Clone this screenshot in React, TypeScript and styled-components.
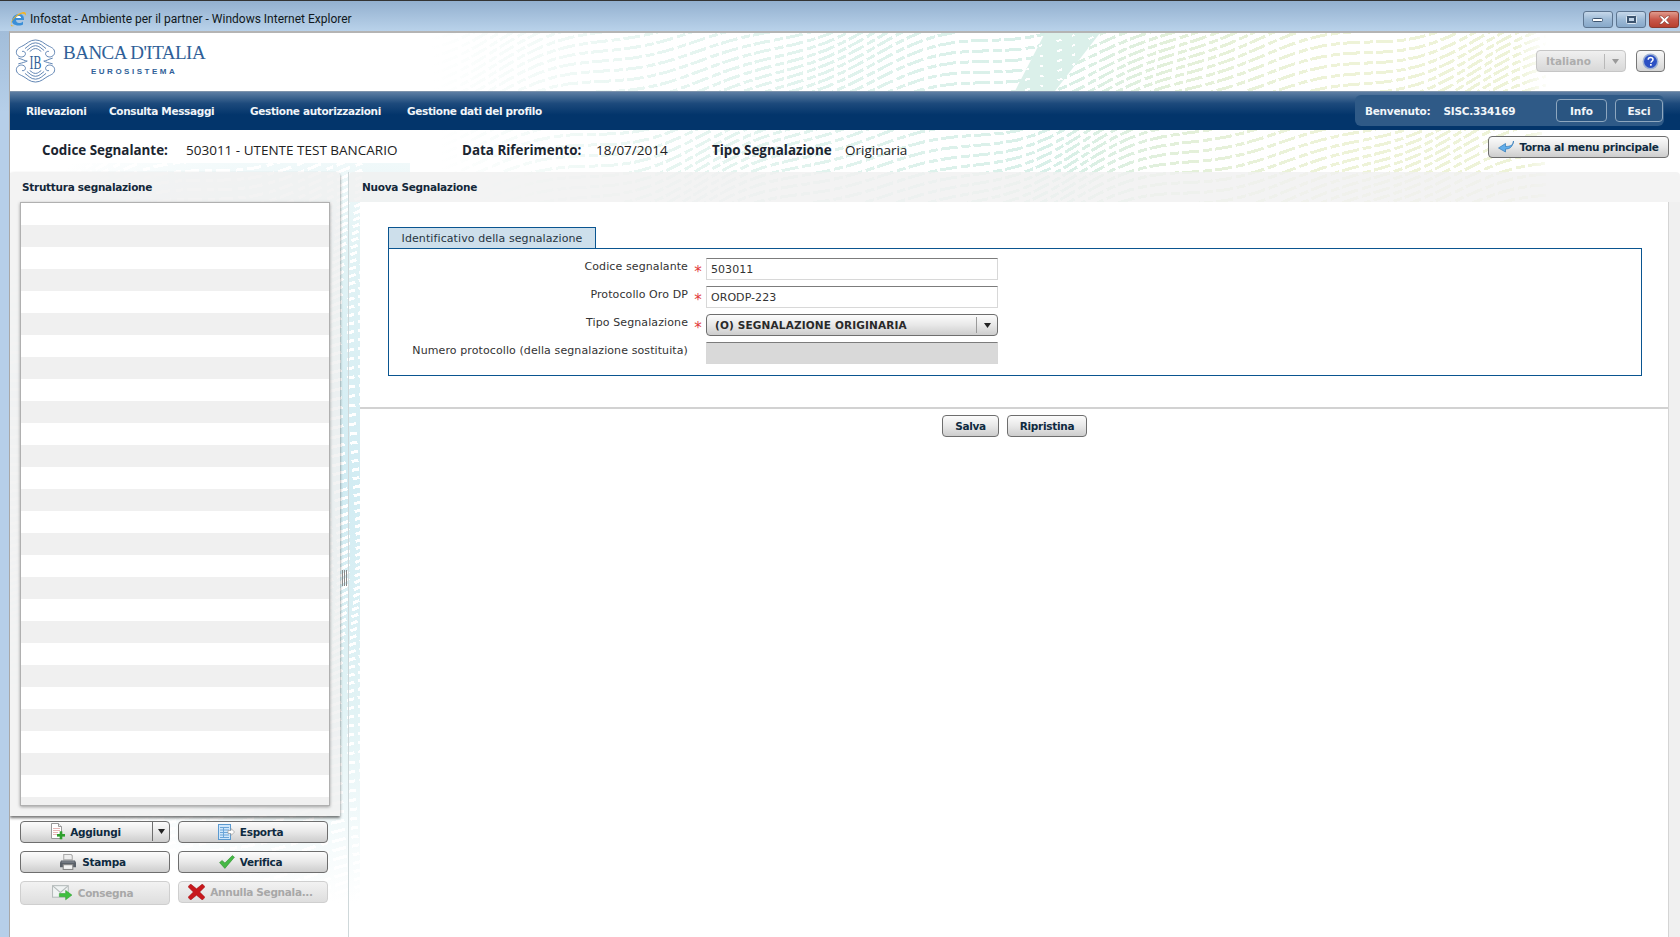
import React from "react";
import styled, { createGlobalStyle } from "styled-components";

const GlobalStyle = createGlobalStyle`
  html, body {
    margin: 0;
    padding: 0;
    height: 100%;
    overflow: hidden;
    background: #fff;
  }
  * { box-sizing: border-box; }
`;

const UI_FONT = `"DejaVu Sans", Verdana, sans-serif`;

/* window chrome */
const Win = styled.div`
  width: 1680px;
  height: 937px;
  display: flex;
  flex-direction: column;
  overflow: hidden;
  background: linear-gradient(#9ab6d3, #b6cfe9 12%, #b6cfe9);
  font-family: ${UI_FONT};
`;

const TitleBar = styled.div`
  height: 31px;
  flex: none;
  display: flex;
  align-items: center;
  gap: 3px;
  padding: 5px 1px 0 10px;
  border-top: 1px solid #333;
  background: linear-gradient(#93b0cf, #b9d2ea);
`;

const TitleText = styled.span`
  font: 12px Roboto, sans-serif;
  color: #101820;
  flex: 1;
`;

const WinControls = styled.div`
  display: flex;
  align-self: flex-start;
  gap: 3px;
  margin-top: 5px;
`;

const WinBtn = styled.div<{ $close?: boolean }>`
  width: 30px;
  height: 17px;
  display: flex;
  align-items: center;
  justify-content: center;
  border: 1px solid ${(p) => (p.$close ? "#8a3a30" : "#5d7590")};
  border-radius: 3px;
  background: ${(p) =>
    p.$close
      ? "linear-gradient(#e09a8c, #c9584a 50%, #b8402f)"
      : "linear-gradient(#c6d8ea, #9dbad6 50%, #87a8c9)"};
`;

const Body = styled.div`
  position: relative;
  flex: 1;
  margin-left: 9px;
  display: flex;
  flex-direction: column;
  background: #fff;
  border-top: 2px solid #b4b4b4;
  border-left: 1px solid #a8a8a8;
  overflow: hidden;
`;

const Backdrop = styled.svg`
  position: absolute;
  left: 0;
  top: 0;
  z-index: 0;
`;

/* top */
const Header = styled.header`
  position: relative;
  z-index: 1;
  height: 58px;
  flex: none;
  display: flex;
  align-items: flex-start;
  padding-left: 5px;
`;

const LogoWrap = styled.div`
  display: flex;
  align-items: center;
  gap: 7px;
  margin-top: 6px;
`;

const LogoText = styled.div`
  display: flex;
  flex-direction: column;
  align-items: center;
  margin-top: -4px;
`;

const LogoName = styled.span`
  font: 19px/22px "Liberation Serif", serif;
  color: #2f5f98;
  letter-spacing: -0.5px;
`;

const LogoSub = styled.span`
  font: bold 8px/11px "Liberation Sans", sans-serif;
  color: #2f5f98;
  letter-spacing: 2.5px;
  margin-top: 2px;
`;

const HeaderTools = styled.div`
  margin-left: auto;
  margin-top: 17px;
  margin-right: 15px;
  display: flex;
  gap: 10px;
`;

const LangSelect = styled.div`
  width: 90px;
  height: 22px;
  display: flex;
  align-items: center;
  border: 1px solid #c6c6c6;
  border-radius: 4px;
  background: linear-gradient(#f0f0f0, #d8d8d8);
  font-size: 10.5px;
  font-weight: bold;
  color: #adadad;
  padding-left: 9px;
`;

const LangArrow = styled.span`
  margin-left: auto;
  width: 21px;
  height: 15px;
  border-left: 1px solid #b8b8b8;
  display: flex;
  align-items: center;
  justify-content: center;
`;

const HelpBtn = styled.div`
  width: 29px;
  height: 22px;
  display: flex;
  align-items: center;
  justify-content: center;
  border: 1px solid #777;
  border-radius: 4px;
  background: linear-gradient(#fafafa, #d4d4d4);
`;

const Nav = styled.nav`
  position: relative;
  z-index: 1;
  height: 39px;
  flex: none;
  display: grid;
  grid-template-columns: 83px 141px 157px 1fr auto;
  align-items: center;
  padding: 0 16px 1px 16px;
  background: linear-gradient(#5d7ea3, #1d4a7c 30%, #03356b 60%, #03356b);
  border-top: 1px solid #7d93ac;
`;

const NavItem = styled.span`
  font-size: 10.5px;
  font-weight: bold;
  color: #f1f5f9;
  letter-spacing: -0.35px;
`;

const UserBox = styled.div`
  height: 31px;
  width: 309px;
  display: flex;
  align-items: center;
  padding: 0 1px 0 10px;
  border-radius: 6px;
  background: #2f5a87;
  color: #f1f5f9;
  font-size: 10.5px;
  font-weight: bold;
  letter-spacing: -0.25px;
`;

const UserName = styled.span`
  margin-left: 13px;
`;

const UserBtn = styled.div<{ $w: number; $first?: boolean }>`
  width: ${(p) => p.$w}px;
  height: 23px;
  margin-left: ${(p) => (p.$first ? "auto" : "8px")};
  display: flex;
  align-items: center;
  justify-content: center;
  border: 1px solid #8ea7bf;
  border-radius: 4px;
  background: #2a5581;
  letter-spacing: 0;
`;

const InfoBar = styled.div`
  position: relative;
  z-index: 1;
  height: 42px;
  flex: none;
  display: grid;
  grid-template-columns: 144px 276px 134px 116px 133px 1fr auto;
  align-items: center;
  padding: 0 11px 2px 32px;
`;

const InfoLabel = styled.span`
  font: bold 13.4px "Open Sans", sans-serif;
  color: #1b2530;
`;

const InfoValue = styled.span`
  font: 13.5px "Open Sans", sans-serif;
  color: #222;
`;

const Btn = styled.div<{ $off?: boolean; $w?: number; $h?: number }>`
  width: ${(p) => (p.$w ? `${p.$w}px` : "auto")};
  height: ${(p) => p.$h ?? 22}px;
  display: flex;
  align-items: center;
  justify-content: center;
  gap: 5px;
  padding-bottom: 1px;
  border: 1px solid ${(p) => (p.$off ? "#cfcfcf" : "#6e6e6e")};
  border-radius: 4px;
  background: ${(p) =>
    p.$off
      ? "linear-gradient(#f2f2f2, #dedede)"
      : "linear-gradient(#fcfcfc, #e8e8e8 50%, #cdcdcd)"};
  color: ${(p) => (p.$off ? "#a8a8a8" : "#0f2a40")};
  font-size: 10.5px;
  font-weight: bold;
  letter-spacing: -0.3px;
`;

const BackBtn = styled(Btn)`
  width: 181px;
  align-self: start;
  margin-top: 6px;
`;

const ActionBtn = styled(Btn)`
  padding-right: 5px;
`;

const SplitBtnPart = styled.span`
  flex: 1;
  height: 100%;
  display: flex;
  align-items: center;
  justify-content: center;
  gap: 5px;
  padding-left: 3px;
`;

const SplitArrow = styled.span`
  width: 17px;
  height: 100%;
  display: flex;
  align-items: center;
  justify-content: center;
  border-left: 1px solid #6e6e6e;
`;

/* main area */
const Main = styled.div`
  position: relative;
  z-index: 1;
  flex: 1;
  min-height: 0;
  display: flex;
`;

const LeftCol = styled.aside`
  width: 330px;
  flex: none;
  display: flex;
  flex-direction: column;
`;

const TreePanel = styled.section`
  height: 644px;
  flex: none;
  padding: 0 10px 0 10px;
  background: rgba(240, 240, 240, 0.82);
  border-radius: 4px 4px 0 0;
  box-shadow: 0 2px 3px rgba(0, 0, 0, 0.55);
`;

const PanelTitle = styled.div`
  height: 30px;
  display: flex;
  align-items: center;
  padding-left: 2px;
  font-size: 10.5px;
  font-weight: bold;
  color: #14283a;
  letter-spacing: -0.28px;
`;

const TreeList = styled.div`
  height: 604px;
  width: 310px;
  overflow: hidden;
  border: 1px solid #b0b0b0;
  background: #fff;
  box-shadow: 0 1px 3px rgba(0, 0, 0, 0.35);
`;

const TreeRow = styled.div<{ $alt: boolean }>`
  height: 22px;
  background: ${(p) => (p.$alt ? "#f0f0f0" : "#fff")};
`;

const ActionGrid = styled.div`
  display: grid;
  grid-template-columns: 150px 150px;
  gap: 8px;
  align-items: start;
  padding: 5px 0 0 10px;
`;

const Splitter = styled.div`
  width: 9px;
  flex: none;
  display: flex;
  align-items: center;
  justify-content: center;
  border-right: 1px solid #cfd8da;
  padding: 46px 0 0 2px;
`;

const Grip = styled.div`
  width: 6px;
  height: 16px;
  background: repeating-linear-gradient(90deg, #8a8a8a 0 1px, transparent 1px 2px);
`;

const RightCol = styled.section`
  flex: 1;
  min-width: 0;
  display: flex;
  flex-direction: column;
  padding: 0 11px;
`;

const RightTitle = styled(PanelTitle)`
  margin: 0 -11px;
  padding-left: 13px;
  background: rgba(240, 240, 240, 0.82);
  border-radius: 4px 4px 0 0;
  flex: none;
`;

const Content = styled.div`
  flex: 1;
  background: #fff;
  display: flex;
  flex-direction: column;
  border-right: 1px solid #d4d4d4;
  box-shadow: 11px 0 0 #f0f0f0;
`;

const FormArea = styled.div`
  height: 207px;
  flex: none;
  padding: 25px 26px 0 28px;
  border-bottom: 2px solid #d2d2d2;
`;

const TabLabel = styled.div`
  width: 208px;
  height: 21px;
  display: flex;
  align-items: center;
  justify-content: center;
  border: 1px solid #0a5590;
  border-bottom: none;
  background: #cddfeb;
  font-size: 11px;
  letter-spacing: 0.1px;
  color: #26343f;
`;

const FieldBox = styled.div`
  height: 128px;
  border: 1px solid #0a5590;
  padding-top: 9px;
  display: grid;
  grid-template-columns: 299px 18px 292px;
  grid-auto-rows: 22px;
  row-gap: 6px;
`;

const FieldLabel = styled.span`
  text-align: right;
  font-size: 11px;
  letter-spacing: 0.1px;
  line-height: 18px;
  color: #333;
`;

const Star = styled.span`
  color: #e23a3a;
  font-size: 15px;
  line-height: 22px;
  text-align: center;
  padding: 3px 0 0 2px;
`;

const TextInput = styled.div<{ $off?: boolean }>`
  height: 22px;
  padding-left: 4px;
  display: flex;
  align-items: center;
  border: 1px solid #d8d8d8;
  border-top-color: #7c7c7c;
  background: ${(p) => (p.$off ? "#d9d9d9" : "#fff")};
  font-size: 11px;
  letter-spacing: 0.05px;
  color: #333;
`;

const SelectBox = styled.div`
  height: 22px;
  display: flex;
  align-items: center;
  padding-left: 8px;
  border: 1px solid #6e6e6e;
  border-radius: 4px;
  background: linear-gradient(#fcfcfc, #e8e8e8 50%, #cdcdcd);
  font-size: 10.5px;
  font-weight: bold;
  letter-spacing: 0.15px;
  color: #2a2a2a;
`;

const SelectArrow = styled.span`
  margin-left: auto;
  width: 21px;
  height: 16px;
  border-left: 1px solid #9a9a9a;
  display: flex;
  align-items: center;
  justify-content: center;
`;

const FormActions = styled.div`
  display: flex;
  gap: 8px;
  padding: 6px 0 0 582px;
`;

const Arrow = ({ color = "#222" }: { color?: string }) => (
  <svg width="7" height="5" viewBox="0 0 7 5">
    <path d="M0 0h7L3.5 5z" fill={color} />
  </svg>
);

const IeIcon = () => (
  <svg width="17" height="16" viewBox="0 0 17 16" style={{ flex: "none" }}>
    <path d="M2 10c0-4 3-7 7-7 3 0 5 2 5 5v1H6c0 2 1.500 3 3 3s3-.5 4-1.500v3c-1 .7-2.500 1-4 1-4 0-7-1.500-7-4.500z" fill="#3a8fd8" />
    <path d="M6 7h5c0-1.500-1-2-2.500-2S6.200 5.700 6 7z" fill="#fff" />
    <path d="M1 13C.5 9 7 2 13 1c3-.500 3.500 1.500 2.500 4C15.500 2.500 12 2 8 4.500 4 7 1.800 10 1 13z" fill="#f0b429" />
    <path d="M1 13c-.8 2.500 1 3 3.500 1.500C2.500 15 1.500 14.500 1 13z" fill="#f0b429" />
  </svg>
);

const MinGlyph = () => (
  <svg width="12" height="6" viewBox="0 0 12 6">
    <rect x="0.500" y="1.500" width="10" height="3" rx="1" fill="#fff" stroke="#3d5570" />
  </svg>
);

const MaxGlyph = () => (
  <svg width="11" height="9" viewBox="0 0 11 9">
    <rect x="0.500" y="0.500" width="10" height="8" rx="1" fill="#3d5570" stroke="#dde8f2" />
    <rect x="3" y="3" width="5" height="3" fill="#c2d5e8" />
  </svg>
);

const CloseGlyph = () => (
  <svg width="13" height="10" viewBox="0 0 13 10">
    <path d="M1 1h3l2.500 2.500L9 1h3L8.500 5 12 9H9L6.500 6.500 4 9H1l3.500-4z" fill="#fff" stroke="#7a3a30" strokeWidth="0.6" />
  </svg>
);

const HelpIcon = () => (
  <svg width="17" height="17" viewBox="0 0 17 17">
    <circle cx="8.500" cy="8.500" r="8" fill="#9fb2d4" />
    <circle cx="8.500" cy="8.500" r="6.500" fill="#2c50c4" />
    <path d="M6.200 6.700c0-1.400 1-2.200 2.400-2.200s2.400.8 2.400 2c0 1.800-2 1.700-2 3.300" fill="none" stroke="#fff" strokeWidth="1.500" />
    <rect x="8" y="11" width="1.700" height="1.700" fill="#fff" />
  </svg>
);

const BackIcon = () => (
  <svg width="16" height="13" viewBox="0 0 16 13">
    <path d="M15.500 1c0 4-3 5.500-8 5.500V3.500L.5 8 7.500 12V9c4 0 7-1.500 8-8z" fill="#63aeea" stroke="#2f78b8" strokeWidth="0.7" />
  </svg>
);

const AddIcon = () => (
  <svg width="15" height="17" viewBox="0 0 15 17">
    <path d="M1.500.500h7l3 3v12h-10z" fill="#fff" stroke="#9a9a9a" />
    <path d="M8.500.500v3h3" fill="#eee" stroke="#9a9a9a" />
    <path d="M3 5.500h7M3 7.500h7M3 9.500h5M3 11.500h4" stroke="#e6b8b8" />
    <rect x="7" y="11" width="8" height="2.600" fill="#2ea02e" />
    <rect x="9.700" y="8.300" width="2.600" height="8" fill="#2ea02e" />
  </svg>
);

const ExportIcon = () => (
  <svg width="17" height="16" viewBox="0 0 17 16">
    <rect x="0.500" y="0.500" width="12" height="15" fill="#cfe6fa" stroke="#5b9ad0" />
    <path d="M2 3.500h9M2 6h9M2 8.500h9M2 11h9M2 13.500h9M5.500 3v11" stroke="#6aa5d8" />
    <path d="M10 6.500h3V4.500l3.500 3.500-3.500 3.500V9.500h-3z" fill="#fff" stroke="#9a9a9a" strokeWidth="0.7" />
  </svg>
);

const PrintIcon = () => (
  <svg width="18" height="16" viewBox="0 0 16 15">
    <path d="M4 .500h7l1 1v4H4z" fill="#eee" stroke="#aaa" />
    <path d="M1.500 6h13l1 2v4.500H.500V8z" fill="#5a6068" />
    <rect x="3.500" y="10" width="9" height="4.500" fill="#f4f4f4" stroke="#888" />
    <rect x="2" y="7" width="12" height="1" fill="#8a9098" />
  </svg>
);

const CheckIcon = () => (
  <svg width="16" height="14" viewBox="0 0 15 13">
    <path d="M.500 7l2.500-2 2.500 2.500L12.500.500 14.500 2 5.500 12.500z" fill="#45b845" stroke="#2a8a2a" strokeWidth="0.5" />
  </svg>
);

const MailIcon = () => (
  <svg width="21" height="16" viewBox="0 0 20 15">
    <rect x="0.500" y="0.500" width="15" height="11" fill="#f0f3f3" stroke="#b5bbbb" />
    <path d="M1 1l7 6 7-6" fill="none" stroke="#b5bbbb" />
    <path d="M7 8h6V5l6 4.500-6 4.500v-3H7z" fill="#3fc03f" stroke="#2a9a2a" strokeWidth="0.5" />
  </svg>
);

const CrossIcon = () => (
  <svg width="17" height="16" viewBox="0 0 16 15">
    <path d="M0 2.500L2.500 0 8 4.500 13.500 0 16 2.500 11 7.500 16 12.500 13.500 15 8 10.500 2.500 15 0 12.500 5 7.500z" fill="#c8181c" stroke="#9c1014" strokeWidth="0.5" />
  </svg>
);

const BancaLogo = () => (
  <svg width="41" height="44" viewBox="0 0 42 46" fill="none" stroke="#5a80b0" strokeWidth="1">
    <path d="M21 1C15 1 12 5 8 7 4 9 1 10 1 14s5 6 8 4 1-6-2-5" />
    <path d="M21 1c6 0 9 4 13 6 4 2 7 3 7 7s-5 6-8 4-1-6 2-5" />
    <path d="M21 4c-5 0-8 4-11 6M21 4c5 0 8 4 11 6M21 7c-4 0-6 3-9 5M21 7c4 0 6 3 9 5M21 10c-3 0-4 2-6 3M21 10c3 0 4 2 6 3" />
    <path d="M21 45c-6 0-9-4-13-6-4-2-7-3-7-7s5-6 8-4 1 6-2 5" />
    <path d="M21 45c6 0 9-4 13-6 4-2 7-3 7-7s-5-6-8-4-1 6 2 5" />
    <path d="M21 42c-5 0-8-4-11-6M21 42c5 0 8-4 11-6M21 39c-4 0-6-3-9-5M21 39c4 0 6-3 9-5M21 36c-3 0-4-2-6-3M21 36c3 0 4-2 6-3" />
    <path d="M3 20c4 1 7 3 9 3s-5 2-9 3M39 20c-4 1-7 3-9 3s5 2 9 3" />
    <text x="0" y="0" transform="translate(21 31) scale(0.62 1)" textAnchor="middle" fontFamily="Liberation Serif, serif" fontSize="20" fill="#2f5f98" stroke="none">IB</text>
  </svg>
);

/* wavy watermark behind the page */
function wavePath(base: number, from: number, to: number, slope: number) {
  const pts: string[] = [];
  for (let x = from; x <= to; x += 16) {
    const y = base - slope * x + 11 * Math.sin(x / 75 + base / 60) + 5 * Math.sin(x / 31);
    pts.push(`${x},${y.toFixed(1)}`);
  }
  return "M" + pts.join("L");
}

const topWaves: string[] = [];
for (let b = 0; b < 820; b += 9) topWaves.push(wavePath(b, 400, 1540, 0.32));

const sideWaves: string[] = [];
for (let b = 160; b < 1060; b += 8) sideWaves.push(wavePath(b, 0, 360, 0.3));

const bandPoints = "1035,0 1090,0 1045,58 1005,58";

const Watermark = () => (
  <Backdrop width="1671" height="906" viewBox="0 0 1671 906">
    <defs>
      <linearGradient id="topInk" gradientUnits="userSpaceOnUse" x1="430" y1="130" x2="1540" y2="30">
        <stop offset="0" stopColor="#d4eee6" stopOpacity="0" />
        <stop offset="0.2" stopColor="#d4eee6" stopOpacity="0.55" />
        <stop offset="0.55" stopColor="#d4eee6" stopOpacity="0.9" />
        <stop offset="0.66" stopColor="#e3f0da" />
        <stop offset="0.8" stopColor="#eef3d8" />
        <stop offset="0.97" stopColor="#eef3d8" />
        <stop offset="1" stopColor="#eef3d8" stopOpacity="0" />
      </linearGradient>
      <radialGradient id="sideWash" gradientUnits="userSpaceOnUse" cx="335" cy="450" r="420">
        <stop offset="0" stopColor="#d2ecf3" />
        <stop offset="0.55" stopColor="#e2f3f5" />
        <stop offset="1" stopColor="#ffffff" />
      </radialGradient>
      <clipPath id="mintBand">
        <polygon points={bandPoints} />
      </clipPath>
    </defs>
    <rect x="0" y="130" width="400" height="776" fill="url(#sideWash)" />
    <g stroke="#fff" strokeWidth="3" fill="none" strokeDasharray="14 6 7 4">
      {sideWaves.map((d, i) => (
        <path key={i} d={d} shapeRendering="crispEdges" />
      ))}
    </g>
    <g stroke="url(#topInk)" strokeWidth="3" fill="none" strokeDasharray="17 4 9 3">
      {topWaves.map((d, i) => (
        <path key={i} d={d} shapeRendering="crispEdges" />
      ))}
    </g>
    <polygon points={bandPoints} fill="#dbf0ea" />
    <g clipPath="url(#mintBand)" stroke="#fff" strokeWidth="2" fill="none" strokeDasharray="5 11 3 15">
      {topWaves.map((d, i) => (
        <path key={i} d={d} shapeRendering="crispEdges" />
      ))}
    </g>
  </Backdrop>
);

const rows = Array.from({ length: 28 }, (_, i) => i % 2 === 1);

export default function App() {
  return (
    <>
      <GlobalStyle />
      <Win>
        <TitleBar>
          <IeIcon />
          <TitleText>Infostat - Ambiente per il partner - Windows Internet Explorer</TitleText>
          <WinControls>
            <WinBtn><MinGlyph /></WinBtn>
            <WinBtn><MaxGlyph /></WinBtn>
            <WinBtn $close><CloseGlyph /></WinBtn>
          </WinControls>
        </TitleBar>

        <Body>
          <Watermark />

          <Header>
            <LogoWrap>
              <BancaLogo />
              <LogoText>
                <LogoName>BANCA D'ITALIA</LogoName>
                <LogoSub>EUROSISTEMA</LogoSub>
              </LogoText>
            </LogoWrap>
            <HeaderTools>
              <LangSelect>
                Italiano
                <LangArrow><Arrow color="#9a9a9a" /></LangArrow>
              </LangSelect>
              <HelpBtn><HelpIcon /></HelpBtn>
            </HeaderTools>
          </Header>

          <Nav>
            <NavItem>Rilevazioni</NavItem>
            <NavItem>Consulta Messaggi</NavItem>
            <NavItem>Gestione autorizzazioni</NavItem>
            <NavItem>Gestione dati del profilo</NavItem>
            <UserBox>
              <span>Benvenuto:</span>
              <UserName>SISC.334169</UserName>
              <UserBtn $w={51} $first>Info</UserBtn>
              <UserBtn $w={48}>Esci</UserBtn>
            </UserBox>
          </Nav>

          <InfoBar>
            <InfoLabel>Codice Segnalante:</InfoLabel>
            <InfoValue>503011 - UTENTE TEST BANCARIO</InfoValue>
            <InfoLabel>Data Riferimento:</InfoLabel>
            <InfoValue>18/07/2014</InfoValue>
            <InfoLabel>Tipo Segnalazione</InfoLabel>
            <InfoValue>Originaria</InfoValue>
            <BackBtn>
              <BackIcon />
              Torna al menu principale
            </BackBtn>
          </InfoBar>

          <Main>
            <LeftCol>
              <TreePanel>
                <PanelTitle>Struttura segnalazione</PanelTitle>
                <TreeList>
                  {rows.map((alt, i) => (
                    <TreeRow key={i} $alt={alt} />
                  ))}
                </TreeList>
              </TreePanel>
              <ActionGrid>
                <Btn>
                  <SplitBtnPart><AddIcon />Aggiungi</SplitBtnPart>
                  <SplitArrow><Arrow /></SplitArrow>
                </Btn>
                <ActionBtn><ExportIcon />Esporta</ActionBtn>
                <ActionBtn><PrintIcon />Stampa</ActionBtn>
                <ActionBtn><CheckIcon />Verifica</ActionBtn>
                <ActionBtn $off $h={24}><MailIcon />Consegna</ActionBtn>
                <ActionBtn $off><CrossIcon />Annulla Segnala...</ActionBtn>
              </ActionGrid>
            </LeftCol>

            <Splitter><Grip /></Splitter>

            <RightCol>
              <RightTitle>Nuova Segnalazione</RightTitle>
              <Content>
                <FormArea>
                  <TabLabel>Identificativo della segnalazione</TabLabel>
                  <FieldBox>
                    <FieldLabel>Codice segnalante</FieldLabel>
                    <Star>*</Star>
                    <TextInput>503011</TextInput>
                    <FieldLabel>Protocollo Oro DP</FieldLabel>
                    <Star>*</Star>
                    <TextInput>ORODP-223</TextInput>
                    <FieldLabel>Tipo Segnalazione</FieldLabel>
                    <Star>*</Star>
                    <SelectBox>
                      (O) SEGNALAZIONE ORIGINARIA
                      <SelectArrow><Arrow /></SelectArrow>
                    </SelectBox>
                    <FieldLabel>Numero protocollo (della segnalazione sostituita)</FieldLabel>
                    <span />
                    <TextInput $off />
                  </FieldBox>
                </FormArea>
                <FormActions>
                  <Btn $w={57}>Salva</Btn>
                  <Btn $w={80}>Ripristina</Btn>
                </FormActions>
              </Content>
            </RightCol>
          </Main>
        </Body>
      </Win>
    </>
  );
}
